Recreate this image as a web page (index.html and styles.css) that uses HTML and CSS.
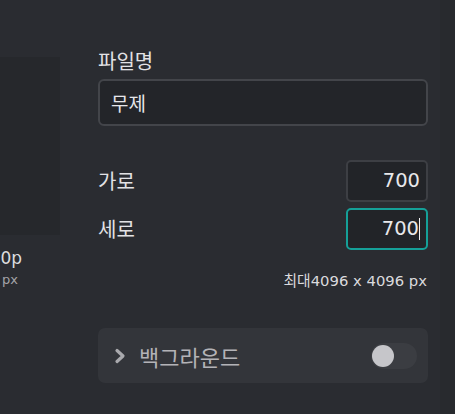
FILE: index.html
```html
<!DOCTYPE html>
<html lang="ko">
<head>
<meta charset="utf-8">
<link rel="stylesheet" href="styles.css">
</head>
<body>
<div class="page">
  <aside class="side">
    <div class="preview"></div>
    <div class="clip size"><span>700 x 700p</span></div>
    <div class="clip unit"><span>700 px</span></div>
  </aside>
  <main class="form">
    <div class="label">파일명</div>
    <div class="text-input">무제</div>
    <div class="row first">
      <span class="label">가로</span>
      <div class="num">700</div>
    </div>
    <div class="row">
      <span class="label">세로</span>
      <div class="num active">700<span class="caret"></span></div>
    </div>
    <div class="hint">최대4096 x 4096 px</div>
    <div class="section">
      <svg class="chev" width="12" height="16" viewBox="0 0 12 16"><path d="M3 2.5 L9 8 L3 13.5" fill="none" stroke="#a9a9ad" stroke-width="3.2" stroke-linecap="round" stroke-linejoin="round"/></svg>
      <span class="section-title">백그라운드</span>
      <div class="toggle"><div class="knob"></div></div>
    </div>
  </main>
  <div class="edge"></div>
</div>
</body>
</html>
```
FILE: styles.css
```css
html, body {
  margin: 0;
  padding: 0;
  background: #2a2c31;
}
body {
  width: 455px;
  height: 414px;
  overflow: hidden;
  font-family: "DejaVu Sans", "Noto Sans CJK KR", sans-serif;
  color: #e4e4e7;
}
.page {
  display: flex;
  height: 414px;
}
.side {
  width: 60px;
  display: flex;
  flex-direction: column;
}
.preview {
  margin-top: 57px;
  height: 178px;
  background: #26282c;
}
.clip {
  display: flex;
  justify-content: flex-end;
  overflow: hidden;
  white-space: nowrap;
}
.clip span { flex: none; }
.size {
  width: 22px;
  margin-top: 12px;
  font-size: 17px;
  line-height: 22px;
  color: #dcdcdf;
}
.unit {
  width: 18px;
  margin-top: 2px;
  font-size: 13px;
  line-height: 18px;
  color: #a4a4a8;
}
.form {
  margin-left: 38px;
  width: 330px;
  padding-top: 48px;
  display: flex;
  flex-direction: column;
}
.label {
  font-family: "Noto Sans CJK KR", sans-serif;
  font-size: 20px;
  line-height: 26px;
  color: #e2e2e5;
}
.text-input {
  margin-top: 5px;
  height: 43px;
  border: 2px solid #43454a;
  border-radius: 6px;
  background: #232529;
  font-family: "Noto Sans CJK KR", sans-serif;
  font-size: 19px;
  line-height: 43px;
  padding-left: 11px;
  color: #e6e6e9;
}
.row {
  margin-top: 6px;
  display: flex;
  justify-content: space-between;
  align-items: center;
}
.row.first { margin-top: 34px; }
.num {
  width: 72px;
  height: 38px;
  border: 2px solid #3d3f44;
  border-radius: 5px;
  background: #222428;
  font-size: 19.5px;
  line-height: 38px;
  padding-right: 6px;
  color: #e8e8eb;
  display: flex;
  justify-content: flex-end;
  align-items: center;
}
.num.active {
  border-color: #15a098;
}
.caret {
  width: 1px;
  height: 22px;
  background: #f2f2f2;
}
.hint {
  margin-top: 22px;
  text-align: right;
  font-size: 14.8px;
  line-height: 18px;
  color: #dadadd;
  padding-right: 1px;
}
.section {
  margin-top: 38px;
  height: 55px;
  border-radius: 7px;
  background: #33353a;
  display: flex;
  align-items: center;
  padding-left: 16px;
  padding-right: 11px;
}
.chev { flex: none; }
.section-title {
  margin-left: 13px;
  font-family: "Noto Sans CJK KR", sans-serif;
  font-size: 22px;
  color: #b3b3b7;
  flex: 1;
}
.toggle {
  width: 46px;
  height: 26px;
  border-radius: 13px;
  background: #3b3d42;
  display: flex;
  align-items: center;
  padding-left: 1px;
  box-sizing: border-box;
}
.knob {
  width: 22px;
  height: 22px;
  border-radius: 50%;
  background: #c6c6ca;
}
.edge {
  margin-left: 12px;
  flex: 1;
  background: #282a2e;
}
```
